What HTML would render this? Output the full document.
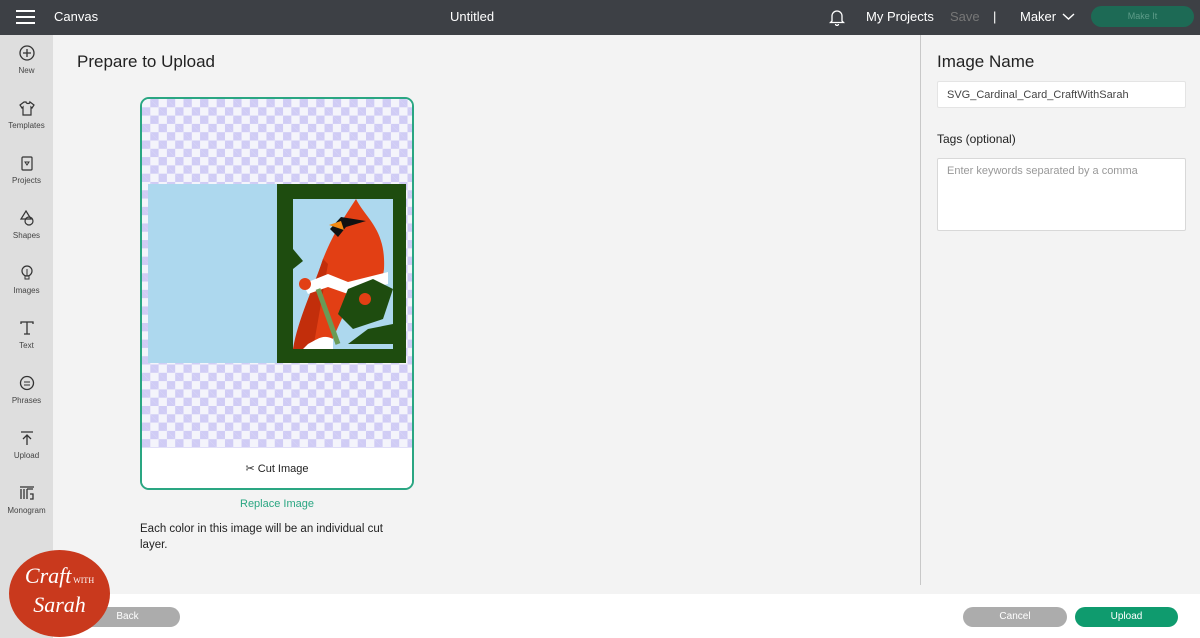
<!DOCTYPE html>
<html><head><style>
*{margin:0;padding:0;box-sizing:border-box}
body{width:1200px;height:638px;overflow:hidden;background:#f3f3f3;font-family:"Liberation Sans",sans-serif;position:relative;color:#222}
.top{position:absolute;left:0;top:0;width:1200px;height:35px;background:#3d4045;color:#fff;font-size:13px}
.top span{position:absolute;top:9px}
.side{position:absolute;left:0;top:35px;width:53px;height:603px;background:#dedede}
.si{position:absolute;left:0;width:53px;text-align:center;font-size:8px;color:#444}
.si svg{display:block;margin:0 auto 5px}
.bot{position:absolute;left:53px;top:594px;width:1147px;height:44px;background:#fff}
.btn{position:absolute;height:20px;border-radius:10px;color:#fff;font-size:10px;text-align:center;line-height:20px}
.chk{background-color:#f4f4fb;background-image:linear-gradient(45deg,#d0ccf5 25%,transparent 25%,transparent 75%,#d0ccf5 75%),linear-gradient(45deg,#d0ccf5 25%,transparent 25%,transparent 75%,#d0ccf5 75%);background-size:16.6px 16.6px;background-position:0 0,8.3px 8.3px}
</style></head><body>
<div class="top">
<div style="position:absolute;left:16px;top:10px;width:19px;height:2px;background:#fff;box-shadow:0 6px 0 #fff,0 12px 0 #fff"></div>
<span style="left:54px">Canvas</span>
<span style="left:450px;font-size:13px">Untitled</span>
<svg style="position:absolute;left:829px;top:9px" width="16" height="17" viewBox="0 0 16 17"><path d="M3 12V7a5 5 0 0 1 10 0v5l1.5 1.5h-13z M6.5 15a1.5 1.5 0 0 0 3 0" fill="none" stroke="#fff" stroke-width="1.3"/></svg>
<span style="left:866px">My Projects</span>
<span style="left:950px;color:#777">Save</span>
<span style="left:993px">|</span>
<span style="left:1020px">Maker</span>
<svg style="position:absolute;left:1062px;top:12px" width="13" height="9"><path d="M1 2l5.5 5 5.5-5" fill="none" stroke="#fff" stroke-width="1.4"/></svg>
<div style="position:absolute;left:1091px;top:6px;width:103px;height:21px;border-radius:11px;background:#1d6a55;color:#5d9b88;font-size:9px;text-align:center;line-height:21px">Make It</div>
</div>
<div class="side">
<div class="si" style="top:10px"><svg width="16" height="16"><circle cx="8" cy="8" r="7" fill="none" stroke="#333" stroke-width="1.3"/><path d="M8 4v8M4 8h8" stroke="#333" stroke-width="1.3"/></svg>New</div>
<div class="si" style="top:65px"><svg width="16" height="16"><path d="M5 2L1 5l2 3 1-1v8h8V7l1 1 2-3-4-3c0 2-4 2-4 0z" fill="none" stroke="#333" stroke-width="1.2"/></svg>Templates</div>
<div class="si" style="top:120px"><svg width="16" height="16"><rect x="3" y="2" width="10" height="13" rx="1" fill="none" stroke="#333" stroke-width="1.2"/><path d="M6 7h4l-2 3z" fill="none" stroke="#333"/></svg>Projects</div>
<div class="si" style="top:175px"><svg width="16" height="16"><path d="M7 1l5 8H2z" fill="none" stroke="#333" stroke-width="1.2"/><circle cx="10" cy="11" r="4" fill="none" stroke="#333" stroke-width="1.2"/></svg>Shapes</div>
<div class="si" style="top:230px"><svg width="16" height="16"><circle cx="8" cy="6" r="5" fill="none" stroke="#333" stroke-width="1.2"/><path d="M6 11h4v3H6zM8 4v7" fill="none" stroke="#333"/></svg>Images</div>
<div class="si" style="top:285px"><svg width="16" height="16"><path d="M2 4V2h12v2M8 2v12M5 14h6" fill="none" stroke="#333" stroke-width="1.3"/></svg>Text</div>
<div class="si" style="top:340px"><svg width="16" height="16"><circle cx="8" cy="8" r="6.5" fill="none" stroke="#333" stroke-width="1.3"/><path d="M5 7h6M5 10h6" stroke="#333"/></svg>Phrases</div>
<div class="si" style="top:395px"><svg width="16" height="16"><path d="M2 2h12M8 15V5M4 9l4-4 4 4" fill="none" stroke="#333" stroke-width="1.3"/></svg>Upload</div>
<div class="si" style="top:450px"><svg width="16" height="16"><path d="M1 2h14M2 4v10M5 4v10M8 4v10M8 4h6M11 9h3v5h-3" fill="none" stroke="#333" stroke-width="1.3"/></svg>Monogram</div>
</div>
<div style="position:absolute;left:77px;top:52px;font-size:17px;color:#222">Prepare to Upload</div>
<div style="position:absolute;left:140px;top:97px;width:274px;height:393px;border:2px solid #2aa682;border-radius:9px;background:#fff;overflow:hidden">
<div class="chk" style="position:absolute;left:0;top:0;width:272px;height:350px"></div>
<div style="position:absolute;left:6px;top:85px;width:130px;height:179px;background:#add8ee"></div>
<div style="position:absolute;left:135px;top:85px;width:129px;height:179px;background:#1e4c0f"></div>
<svg style="position:absolute;left:151px;top:100px" width="100" height="150" viewBox="0 0 100 150">
<rect width="100" height="150" fill="#add8ee"/>
<path d="M63 0c10 20 30 30 28 70-2 20-20 40-40 45L35 150H0L30 60C40 35 50 20 63 0z" fill="#e23f14"/>
<path d="M30 60c-10 30-25 60-30 90h20l15-85z" fill="#c22e0b"/>
<path d="M48 18l25 4-20 6-8 10-8-8z" fill="#111"/>
<path d="M36 26l12-4 3 9z" fill="#f28a14"/>
<path d="M10 85l25-10 20 8 40-10v12L55 95 35 88 15 95z" fill="#fff"/>
<path d="M25 90l20 55" stroke="#6a9b56" stroke-width="5"/>
<path d="M55 90l25-10 20 10-10 30-30 10-15-15z" fill="#1e4c0f"/>
<path d="M55 145h45v-20l-25 5z" fill="#1e4c0f"/>
<circle cx="12" cy="85" r="6" fill="#e23f14"/><circle cx="72" cy="100" r="6" fill="#e23f14"/>
<path d="M0 50l10 12-10 8z" fill="#1e4c0f"/>
<path d="M15 145c10-5 15-10 25-5v10H10z" fill="#fff"/>
</svg>
<div style="position:absolute;left:0;top:349px;width:270px;height:42px;background:#fff;text-align:center;line-height:42px;font-size:11px;color:#222">✂ Cut Image</div>
</div>
<div style="position:absolute;left:140px;top:498px;width:274px;text-align:center;font-size:11px;color:#2aa682">Replace Image</div>
<div style="position:absolute;left:140px;top:521px;width:262px;font-size:11.5px;line-height:16px;color:#222">Each color in this image will be an individual cut layer.</div>
<div style="position:absolute;left:920px;top:35px;width:1px;height:550px;background:#c8c8c8"></div>
<div style="position:absolute;left:937px;top:52px;font-size:17px;color:#222">Image Name</div>
<div style="position:absolute;left:937px;top:81px;width:249px;height:27px;background:#fff;border:1px solid #e4e4e4;border-radius:2px;font-size:11px;color:#444;padding:7px 9px">SVG_Cardinal_Card_CraftWithSarah</div>
<div style="position:absolute;left:937px;top:132px;font-size:12px;color:#222">Tags (optional)</div>
<div style="position:absolute;left:937px;top:158px;width:249px;height:73px;background:#fff;border:1px solid #d8d8d8;border-radius:2px;font-size:11px;color:#999;padding:6px 9px">Enter keywords separated by a comma</div>
<div class="bot"></div>
<div class="btn" style="left:75px;top:607px;width:105px;background:#acacac">Back</div>
<div class="btn" style="left:963px;top:607px;width:104px;background:#acacac">Cancel</div>
<div class="btn" style="left:1075px;top:607px;width:103px;background:#0f9b6e">Upload</div>
<div style="position:absolute;left:9px;top:550px;width:101px;height:87px;border-radius:50%;background:#c9391d;color:#fff;font-family:'Liberation Serif',serif;font-style:italic;text-align:center;font-size:22px;line-height:24px;padding-top:14px">Craft<span style="font-size:8px;font-style:normal"> WITH</span><br>Sarah</div>
</body></html>
